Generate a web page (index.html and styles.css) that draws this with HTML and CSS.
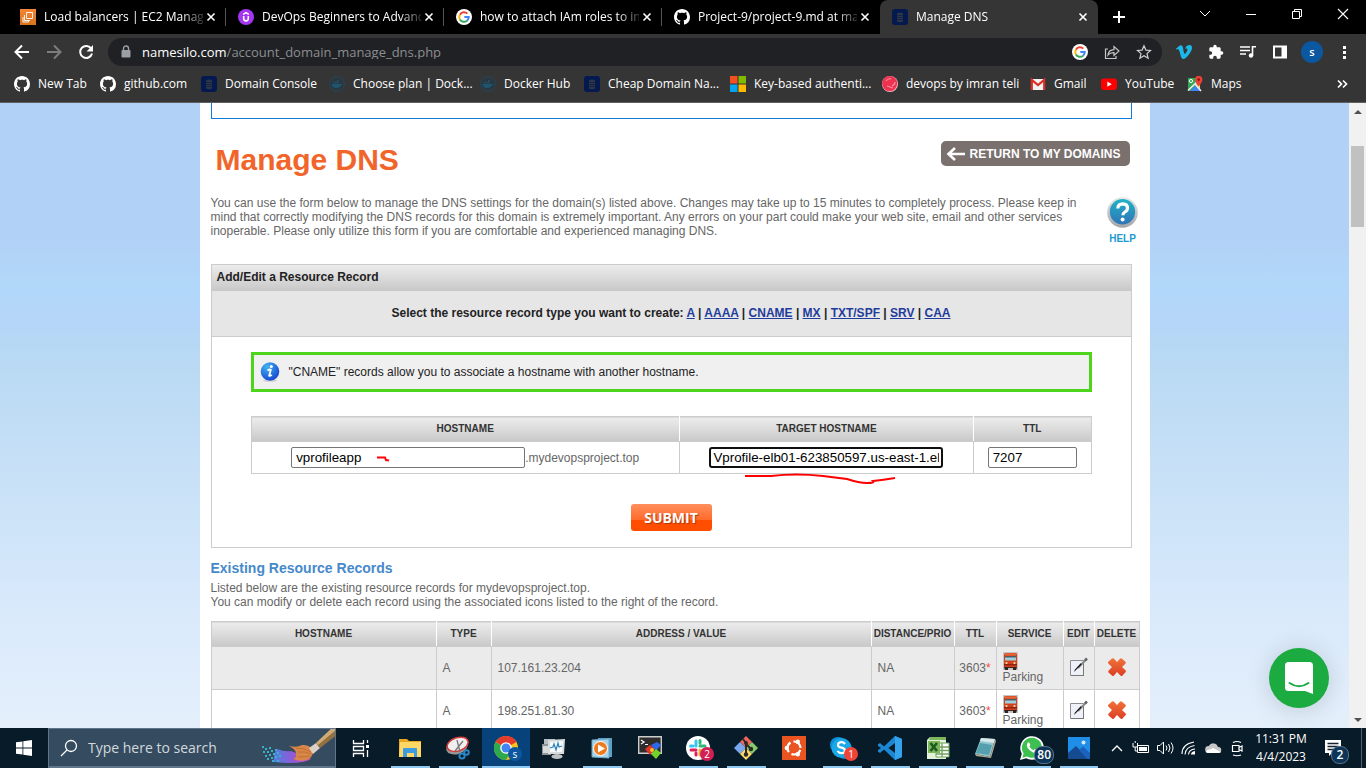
FILE: index.html
```html
<!DOCTYPE html>
<html lang="en">
<head>
<meta charset="utf-8">
<title>Manage DNS</title>
<link rel="stylesheet" href="styles.css">
</head>
<body>
<svg class="defs" aria-hidden="true">
  <defs>
    <linearGradient id="g-orange" x1="0" y1="0" x2="0" y2="1"><stop offset="0" stop-color="#f58536"/><stop offset="1" stop-color="#d9711b"/></linearGradient>
    <linearGradient id="g-help" x1="0" y1="0" x2="0" y2="1"><stop offset="0" stop-color="#22b3c6"/><stop offset="1" stop-color="#2f74b8"/></linearGradient>
    <linearGradient id="g-ring" x1="0" y1="0" x2="0" y2="1"><stop offset="0" stop-color="#e8e8e8"/><stop offset="1" stop-color="#a5a5a8"/></linearGradient>
    <radialGradient id="g-info" cx=".35" cy=".25" r=".9"><stop offset="0" stop-color="#3fb4f4"/><stop offset="1" stop-color="#1236c9"/></radialGradient>
    <linearGradient id="g-x" x1="0" y1="0" x2="0" y2="1"><stop offset="0" stop-color="#f0733a"/><stop offset="1" stop-color="#db3f24"/></linearGradient>
    <linearGradient id="g-brush" x1="0" y1="0" x2="1" y2="0"><stop offset="0" stop-color="#4f7fe0"/><stop offset=".5" stop-color="#8f5bd6"/><stop offset="1" stop-color="#d24fc4"/></linearGradient>
  </defs>
  <symbol id="i-close" viewBox="0 0 16 16"><path d="M4.500 4.500l7 7M11.500 4.500l-7 7" stroke="#fff" stroke-width="1.600" fill="none"/></symbol>
  <symbol id="i-github" viewBox="0 0 16 16"><path fill="#fff" d="M8 0C3.580 0 0 3.580 0 8c0 3.540 2.290 6.530 5.470 7.590.4.070.550-.170.550-.380 0-.190-.010-.820-.010-1.490-2.010.370-2.530-.490-2.690-.940-.090-.230-.480-.940-.820-1.130-.280-.150-.680-.520-.010-.530.630-.010 1.080.580 1.230.820.720 1.210 1.870.870 2.330.660.070-.520.280-.870.510-1.070-1.780-.2-3.640-.890-3.640-3.950 0-.870.310-1.590.820-2.150-.080-.2-.360-1.020.080-2.120 0 0 .670-.210 2.200.820.640-.180 1.320-.270 2-.270s1.360.090 2 .270c1.530-1.040 2.200-.820 2.200-.820.440 1.100.160 1.920.080 2.120.510.560.820 1.270.820 2.150 0 3.070-1.870 3.750-3.650 3.950.290.250.540.730.540 1.480 0 1.070-.010 1.930-.010 2.200 0 .210.150.460.550.380A8.010 8.010 0 0 0 16 8c0-4.420-3.580-8-8-8z"/></symbol>
  <symbol id="i-silo" viewBox="0 0 16 16"><rect width="16" height="16" rx="3" fill="#04194f"/><path d="M5 4.500q3-2 6 0v8q-3 1.500-6 0z" fill="#2e3646"/><path d="M5 6.500h6M5 8.500h6M5 10.500h6" stroke="#0b1c49" stroke-width=".7"/></symbol>
  <symbol id="i-docker" viewBox="0 0 16 16"><circle cx="8" cy="8" r="7.400" fill="#2c363d" stroke="#24475c"/><path d="M2.500 8h9q1.500 0 2-1 .3 1.500-1.300 1.800Q11 12 7 12q-4 0-4.500-4z" fill="#1e5573"/><path d="M4 5.800h1.500v1.500H4zM6 5.800h1.500v1.500H6zM8 5.800h1.500v1.500H8zM8 4h1.500v1.400H8z" fill="#1e5573"/></symbol>
  <symbol id="i-google" viewBox="0 0 16 16"><circle cx="8" cy="8" r="8" fill="#fff"/><path d="M11.360 4.640A4.750 4.750 0 0 0 3.880 5.630" stroke="#ea4335" stroke-width="2" fill="none"/><path d="M3.880 5.630a4.750 4.750 0 0 0 0 4.750" stroke="#fbbc05" stroke-width="2" fill="none"/><path d="M3.880 10.380a4.750 4.750 0 0 0 7.180 1.260" stroke="#34a853" stroke-width="2" fill="none"/><path d="M11.060 11.640A4.750 4.750 0 0 0 12.750 8H8.300" stroke="#4285f4" stroke-width="2" fill="none"/></symbol>
  <symbol id="i-bus" viewBox="0 0 15 18"><rect width="15" height="18" fill="#c9c4c4"/><path d="M1 2.500Q1 1 3 1h9q2 0 2 1.500V15H1z" fill="#d1401f"/><path d="M2 1.500h11v2H2z" fill="#e8683c"/><path d="M2 4h11v4.500H2z" fill="#9fd0dc"/><path d="M2 4h11v1.500H2z" fill="#4d5d66"/><path d="M1 12h13v1.500H1z" fill="#8e2312"/><circle cx="3.500" cy="11" r="1.100" fill="#ffe2a0"/><circle cx="11.500" cy="11" r="1.100" fill="#ffe2a0"/><path d="M1 15h4v3H2zM10 15h4l-1 3h-3z" fill="#2b2525"/><path d="M5 15h5v1H5z" fill="#4b1e15"/></symbol>
  <symbol id="i-edit" viewBox="0 0 20 20"><path d="M1.500 3.500h13v15h-13z" fill="#eef1f8" stroke="#8a8d94"/><path d="M2 18.500h13M14.500 4v15" stroke="#777" fill="none"/><path d="M17.500 2L9 11" stroke="#8a8a8a" stroke-width="2"/><path d="M12.500 7.500L5 15l1-2.500 6-6.500z" fill="#111"/><path d="M18 1.500l-2 2" stroke="#666" stroke-width="2.500"/></symbol>
  <symbol id="i-delete" viewBox="0 0 20 20"><path d="M5 1.500q1-.8 2 .3l3 3.200 3-3.200q1-1 2 0l3.500 3q.8 1-.2 2L15 10l3.500 3.200q1 1 0 2L15.500 18.500q-1 1-2 0L10 15l-3 3.500q-1 1-2 0l-3.500-3q-.8-1 .2-2L5 10 1.500 6.800q-1-1-.2-2z" fill="url(#g-x)"/></symbol>
</svg>

<header class="browser">
  <nav class="tabstrip" aria-label="Tabs">
    <div class="tab"><svg class="icon16" viewBox="0 0 16 16"><path fill="url(#g-orange)" d="M0 0h16v16H0z"/><path d="M6.500 3.500h6v6h-6zM4.500 6v5.500H10M3 8v5h5.500v-2" fill="none" stroke="#fff" stroke-width=".9"/></svg><span class="tab-title">Load balancers | EC2 Manage</span><button class="tab-close" aria-label="Close tab"><svg><use href="#i-close"/></svg></button></div>
    <div class="tab"><svg class="icon16" viewBox="0 0 16 16"><circle cx="8" cy="8" r="8" fill="#a435f0"/><path d="M5.200 5.400L8 3.600l2.800 1.800M5.700 7v2.600q0 2.300 2.300 2.300t2.300-2.300V7" fill="none" stroke="#fff" stroke-width="1.600"/></svg><span class="tab-title">DevOps Beginners to Advanc</span><button class="tab-close" aria-label="Close tab"><svg><use href="#i-close"/></svg></button></div>
    <div class="tab"><svg class="icon16"><use href="#i-google"/></svg><span class="tab-title">how to attach IAm roles to in</span><button class="tab-close" aria-label="Close tab"><svg><use href="#i-close"/></svg></button></div>
    <div class="tab tab-last"><svg class="icon16"><use href="#i-github"/></svg><span class="tab-title">Project-9/project-9.md at ma</span><button class="tab-close" aria-label="Close tab"><svg><use href="#i-close"/></svg></button></div>
    <div class="tab tab-active"><svg class="icon16"><use href="#i-silo"/></svg><span class="tab-title">Manage DNS</span><button class="tab-close" aria-label="Close tab"><svg><use href="#i-close"/></svg></button></div>
    <button class="new-tab" aria-label="New tab"><svg viewBox="0 0 16 16"><path d="M8 2v12M2 8h12" stroke="#fff" stroke-width="2"/></svg></button>
    <div class="window-controls">
      <button aria-label="Search tabs"><svg viewBox="0 0 16 16"><path d="M3 5l5 5 5-5" fill="none" stroke="#fff"/></svg></button>
      <button aria-label="Minimize"><svg viewBox="0 0 16 16"><path d="M3 8.500h10" stroke="#fff"/></svg></button>
      <button aria-label="Restore"><svg viewBox="0 0 16 16"><path d="M3.500 5.500h7v7h-7zM5.500 5.500v-2h7v7h-2" fill="none" stroke="#fff"/></svg></button>
      <button aria-label="Close"><svg viewBox="0 0 16 16"><path d="M3 3l10 10M13 3L3 13" stroke="#fff" stroke-width="1.100"/></svg></button>
    </div>
  </nav>

  <div class="toolbar">
    <button aria-label="Back"><svg viewBox="0 0 16 16"><path d="M15 8H2M8 1.500L1.500 8 8 14.500" fill="none" stroke="#fff" stroke-width="2"/></svg></button>
    <button aria-label="Forward"><svg viewBox="0 0 16 16"><path d="M1 8h13M8 1.500L14.500 8 8 14.500" fill="none" stroke="#7d7d7d" stroke-width="2"/></svg></button>
    <button aria-label="Reload"><svg viewBox="0 0 16 16"><path d="M13.300 4.800A6 6 0 1 0 14 9.500" fill="none" stroke="#fff" stroke-width="2"/><path d="M15 1v6.500H8.500z" fill="#fff"/></svg></button>
    <div class="address">
      <svg class="lock" viewBox="0 0 10 14"><rect x="0.500" y="5" width="9" height="7.500" rx="1" fill="#9aa0a6"/><path d="M2.500 5V3.500a2.500 2.500 0 0 1 5 0V5" fill="none" stroke="#9aa0a6" stroke-width="1.400"/></svg>
      <label class="host" for="url">namesilo.com</label>
      <input id="url" class="url" type="text" value="/account_domain_manage_dns.php">
      <button aria-label="Google"><svg><use href="#i-google"/></svg></button>
      <button aria-label="Share"><svg viewBox="0 0 16 16"><path d="M4 5H1.500v9.500H12V12" fill="none" stroke="#c7c7c7" stroke-width="1.200"/><path d="M4 11q.5-5 6-5.300V2.500L15 7l-5 4.500V8.600Q6 8.500 4 11z" fill="none" stroke="#c7c7c7" stroke-width="1.200"/></svg></button>
      <button aria-label="Bookmark"><svg viewBox="0 0 16 16"><path d="M8 1.800l1.900 4.300 4.600.4-3.500 3.100 1.100 4.600L8 11.700l-4.100 2.500L5 9.600 1.500 6.500l4.600-.4z" fill="none" stroke="#d0d0d0" stroke-width="1.200"/></svg></button>
    </div>
    <button aria-label="Vimeo"><svg viewBox="0 0 24 24"><path fill="#1ab7ea" d="M23.977 6.416c-.105 2.338-1.739 5.543-4.894 9.609-3.268 4.247-6.026 6.370-8.290 6.370-1.409 0-2.578-1.294-3.553-3.881L5.322 11.400C4.603 8.816 3.834 7.522 3.010 7.522c-.179 0-.806.378-1.881 1.132L0 7.197a315.065 315.065 0 0 0 3.501-3.128C5.080 2.701 6.266 1.984 7.055 1.910c1.867-.180 3.016 1.100 3.447 3.838.465 2.953.789 4.789.971 5.507.539 2.450 1.131 3.674 1.776 3.674.502 0 1.256-.796 2.265-2.385 1.004-1.589 1.540-2.797 1.612-3.628.144-1.371-.395-2.061-1.614-2.061-.574 0-1.167.121-1.777.391 1.186-3.868 3.434-5.757 6.762-5.637 2.473.060 3.628 1.664 3.493 4.797z"/></svg></button>
    <button aria-label="Extensions"><svg viewBox="0 0 24 24"><path fill="#fff" d="M20.500 11H19V7c0-1.100-.9-2-2-2h-4V3.500a2.500 2.500 0 0 0-5 0V5H4c-1.100 0-1.990.9-1.990 2v3.800H3.500c1.490 0 2.700 1.210 2.700 2.700s-1.210 2.700-2.700 2.700H2V20c0 1.100.9 2 2 2h3.800v-1.500c0-1.490 1.210-2.700 2.700-2.700s2.700 1.210 2.700 2.700V22H17c1.100 0 2-.9 2-2v-4h1.500a2.500 2.500 0 0 0 0-5z"/></svg></button>
    <button aria-label="Media"><svg viewBox="0 0 16 16"><path d="M0 3h10M0 6.500h10M0 10h6" stroke="#fff" stroke-width="1.600"/><path d="M12.500 11.500V2.800H16" fill="none" stroke="#fff" stroke-width="1.600"/><circle cx="11" cy="11.500" r="2.200" fill="#fff"/></svg></button>
    <button aria-label="Side panel"><svg viewBox="0 0 16 16"><path d="M2 2.500h12v11H2z" fill="none" stroke="#fff" stroke-width="2"/><path d="M9.500 2.500H14v11H9.500z" fill="#fff"/></svg></button>
    <button aria-label="Profile"><span class="avatar">s</span></button>
    <button aria-label="Menu"><svg viewBox="0 0 16 16"><path d="M7 2h3v3H7zM7 7h3v3H7zM7 12h3v3H7z" fill="#fff"/></svg></button>
  </div>

  <nav class="bookmarks" aria-label="Bookmarks">
    <a href="#"><svg><use href="#i-github"/></svg>New Tab</a>
    <a href="#"><svg><use href="#i-github"/></svg>github.com</a>
    <a href="#"><svg><use href="#i-silo"/></svg>Domain Console</a>
    <a href="#"><svg><use href="#i-docker"/></svg>Choose plan | Dock...</a>
    <a href="#"><svg><use href="#i-docker"/></svg>Docker Hub</a>
    <a href="#"><svg><use href="#i-silo"/></svg>Cheap Domain Na...</a>
    <a href="#"><svg viewBox="0 0 16 16"><path fill="#f25022" d="M0 0h7.500v7.500H0z"/><path fill="#7fba00" d="M8.500 0H16v7.500H8.500z"/><path fill="#00a4ef" d="M0 8.500h7.500V16H0z"/><path fill="#ffb900" d="M8.500 8.500H16V16H8.500z"/></svg>Key-based authenti...</a>
    <a href="#"><svg viewBox="0 0 16 16"><circle cx="8" cy="8" r="8" fill="#f9b6bf"/><circle cx="7.700" cy="7.600" r="7.500" fill="#ee3350"/><path d="M4 5q2-3 5-2M10 10q3-1 3-4M5 10l6 2" stroke="#ff8fa0" stroke-width="1.200" fill="none"/></svg>devops by imran teli</a>
    <a href="#"><svg viewBox="0 0 16 16"><path fill="#f2f2f2" d="M1 3h14v11H1z"/><path d="M1.800 14V3.800L8 9l6.200-5.200V14" fill="none" stroke="#d93025" stroke-width="2.200"/></svg>Gmail</a>
    <a href="#"><svg viewBox="0 0 16 16"><rect y="2.500" width="16" height="11.500" rx="3" fill="#f00"/><path d="M6.300 5.500v5.300l4.500-2.600z" fill="#fff"/></svg>YouTube</a>
    <a href="#"><svg viewBox="0 0 16 16"><path fill="#34a853" d="M1 2h12v13H1z"/><path fill="#4285f4" d="M3 15l6-6 5 6z"/><path fill="#f3d25b" d="M9 8l4 5V5z"/><path d="M1 14.500L12 4M8.500 8.500L14 15" stroke="#eee" stroke-width="1.600"/><circle cx="4" cy="5" r="1.600" fill="none" stroke="#fff"/><path d="M8 3.500a3.700 3.700 0 0 1 7.400 0q0 2.500-3.700 7Q8 6 8 3.500z" fill="#ea4335"/><circle cx="11.700" cy="3.600" r="1.300" fill="#811"/></svg>Maps</a>
    <button class="more" aria-label="More bookmarks"><svg viewBox="0 0 16 16"><path d="M3 4.500L6.500 8 3 11.500M8 4.500L11.500 8 8 11.500" fill="none" stroke="#fff" stroke-width="1.700"/></svg></button>
  </nav>
</header>

<div class="viewport">
  <main class="canvas">
    <div class="page">
      <div class="domain-box"></div>
      <div class="title-row">
        <h1>Manage DNS</h1>
        <a class="return" href="#"><svg viewBox="0 0 20 14"><path d="M19 7H3M9 1L2.500 7 9 13" fill="none" stroke="#fff" stroke-width="2.600"/></svg>RETURN TO MY DOMAINS</a>
      </div>
      <div class="intro">
        <p>You can use the form below to manage the DNS settings for the domain(s) listed above. Changes may take up to 15 minutes to completely process. Please keep in mind that correctly modifying the DNS records for this domain is extremely important. Any errors on your part could make your web site, email and other services inoperable. Please only utilize this form if you are comfortable and experienced managing DNS.</p>
        <a class="help" href="#"><svg viewBox="0 0 31 31"><circle cx="15.500" cy="15.500" r="15.300" fill="url(#g-ring)"/><circle cx="15.500" cy="14.800" r="12.700" fill="url(#g-help)"/><path d="M10.800 11.500q.2-4.700 5-4.700 4.700.2 4.700 4.200 0 2.400-2.600 4-2 1.200-2 3.200" fill="none" stroke="#fff" stroke-width="3.200"/><circle cx="15.600" cy="22.500" r="2" fill="#fff"/></svg>HELP</a>
      </div>

      <form class="panel">
        <h2 class="panel-head">Add/Edit a Resource Record</h2>
        <p class="types">Select the resource record type you want to create: <a href="#">A</a> | <a href="#">AAAA</a> | <a href="#">CNAME</a> | <a href="#">MX</a> | <a href="#">TXT/SPF</a> | <a href="#">SRV</a> | <a href="#">CAA</a></p>
        <div class="panel-body">
          <p class="notice"><svg viewBox="0 0 20 20"><ellipse cx="10" cy="18.500" rx="7" ry="1.300" fill="#cfcfd6"/><circle cx="10" cy="9.500" r="9.300" fill="url(#g-info)"/><circle cx="11.300" cy="4.600" r="1.500" fill="#fff"/><path d="M7.500 8.500q2-1.500 3.300-.8l-1.600 6q.8.700 2.500-.8" fill="none" stroke="#fff" stroke-width="1.800"/></svg>"CNAME" records allow you to associate a hostname with another hostname.</p>
          <table class="grid entry">
            <colgroup><col class="c-host"><col class="c-target"><col class="c-ttl"></colgroup>
            <thead><tr><th id="l-host">HOSTNAME</th><th id="l-target">TARGET HOSTNAME</th><th id="l-ttl">TTL</th></tr></thead>
            <tbody><tr>
              <td><div class="field"><input type="text" aria-labelledby="l-host" value="vprofileapp">.mydevopsproject.top<svg class="mark mark-host" viewBox="0 0 14 6"><path d="M1 1.500h8l1 2.500 3 .5" fill="none" stroke="#f00" stroke-width="2"/></svg></div></td>
              <td><div class="field"><input class="focused" type="text" aria-labelledby="l-target" value="Vprofile-elb01-623850597.us-east-1.elb.amazonaws.com"><svg class="mark mark-target" viewBox="0 0 152 12"><path d="M1 3h26q25-3 52 0l24 3q12 4 20 4t6-2q10-1 22-3" fill="none" stroke="#f00" stroke-width="2"/></svg></div></td>
              <td><div class="field"><input class="short" type="text" aria-labelledby="l-ttl" value="7207"></div></td>
            </tr></tbody>
          </table>
          <button class="submit" type="button">SUBMIT</button>
        </div>
      </form>

      <h2 class="records-title">Existing Resource Records</h2>
      <p class="records-text">Listed below are the existing resource records for mydevopsproject.top.<br>You can modify or delete each record using the associated icons listed to the right of the record.</p>
      <table class="grid records">
        <colgroup><col class="r-host"><col class="r-type"><col><col class="r-dist"><col class="r-ttl"><col class="r-service"><col class="r-edit"><col class="r-delete"></colgroup>
        <thead><tr><th>HOSTNAME</th><th>TYPE</th><th>ADDRESS / VALUE</th><th>DISTANCE/PRIO</th><th>TTL</th><th>SERVICE</th><th>EDIT</th><th>DELETE</th></tr></thead>
        <tbody>
          <tr><td></td><td>A</td><td>107.161.23.204</td><td>NA</td><td class="ttl">3603<span class="star">*</span></td><td class="service"><svg><use href="#i-bus"/></svg>Parking</td><td class="action"><button aria-label="Edit"><svg><use href="#i-edit"/></svg></button></td><td class="action"><button aria-label="Delete"><svg><use href="#i-delete"/></svg></button></td></tr>
          <tr><td></td><td>A</td><td>198.251.81.30</td><td>NA</td><td class="ttl">3603<span class="star">*</span></td><td class="service"><svg><use href="#i-bus"/></svg>Parking</td><td class="action"><button aria-label="Edit"><svg><use href="#i-edit"/></svg></button></td><td class="action"><button aria-label="Delete"><svg><use href="#i-delete"/></svg></button></td></tr>
        </tbody>
      </table>
    </div>
  </main>
  <div class="scrollbar"><span class="arrow up"></span><span class="thumb"></span><span class="arrow down"></span></div>
  <button class="chat" aria-label="Open chat"><svg viewBox="0 0 28 32"><path d="M3.500 0h21Q28 0 28 3.500V32l-8-3H3.500Q0 29 0 25.500v-22Q0 0 3.500 0z" fill="#fff"/><path d="M4.500 21q9.500 6.500 19 0" fill="none" stroke="#1bab40" stroke-width="2" stroke-linecap="round"/></svg></button>
</div>

<footer class="taskbar">
  <button class="start" aria-label="Start"><svg viewBox="0 0 16 16"><path d="M0 2.300l6.500-.9v6.200H0zM7.300 1.300L16 0v7.600H7.300zM0 8.400h6.500v6.200L0 13.700zM7.300 8.400H16V16l-8.700-1.300z" fill="#fff"/></svg></button>
  <div class="search">
    <svg class="magnifier" viewBox="0 0 18 18"><circle cx="11" cy="7" r="5.500" fill="none" stroke="#fff" stroke-width="1.300"/><path d="M7 11L1 17" stroke="#fff" stroke-width="1.300"/></svg>
    <input type="text" aria-label="Search" placeholder="Type here to search">
    <svg class="brush" viewBox="0 0 76 38"><path d="M15 33q-1-8 3-13 8 3 14 2l20 8q-10 6-37 3z" fill="url(#g-brush)"/><g fill="#35b4c9"><path d="M3 17h2v2H3zM6 19h2v2H6zM10 18h2v2h-2zM4 22h2v2H4zM8 22h2v2H8zM12 21h2v2h-2zM16 20h2v2h-2zM6 26h2v2H6zM10 25h2v2h-2zM14 24h2v2h-2zM18 23h2v2h-2zM8 29h2v2H8zM12 28h2v2h-2zM16 27h2v2h-2zM20 26h2v2h-2zM13 31h2v2h-2zM18 31h2v2h-2z"/></g><path d="M30 17q8 2 13-1 8-1 11 6 0 7-7 9-6 2-13-1 4-1 3-5 0-5-7-8z" fill="#d98748"/><path d="M37 19q9 0 15 4M39 23q7-1 13 2M39 28q6 0 12-1" stroke="#b96a30" stroke-width=".8" fill="none"/><path d="M50 19l7-5 4 5-7 6z" fill="#dccfc6"/><path d="M57 14L74-2h4v8L61 19z" fill="#92703f"/><path d="M57 14L74-2h3v3L59 16z" fill="#cfac76"/></svg>
  </div>
  <button class="app" aria-label="Task view"><svg viewBox="0 0 24 24"><path d="M5.500 4v3.500h10V4M5.500 21v-3.500h10V21M5.500 10.500h10v4h-10zM19.500 4v3M19.500 14v7" fill="none" stroke="#fff" stroke-width="1.300"/><path d="M18 9h3v3h-3z" fill="#fff"/></svg></button>
  <div class="apps">
    <button class="app open" aria-label="File Explorer"><svg viewBox="0 0 24 24"><path d="M1 3h8l2 2h12v16H1z" fill="#e9a51e"/><path d="M2 6h21v15H1z" fill="#ffd766"/><path d="M5 21v-8q0-1 1-1h12q1 0 1 1v8h-3v-4H9v4z" fill="#3d9be0"/></svg></button>
    <button class="app open" aria-label="Snipping Tool"><svg viewBox="0 0 24 24"><ellipse cx="11" cy="11" rx="11" ry="7" transform="rotate(-18 11 11)" fill="#999"/><ellipse cx="11.500" cy="8.500" rx="10.800" ry="6.600" transform="rotate(-18 11 8)" fill="#f0eeee" stroke="#d53d3d" stroke-width="1.500"/><path d="M11 4l3 12M17 5L9 15" stroke="#777" stroke-width="1.300"/><circle cx="16" cy="20" r="2.600" fill="none" stroke="#2b86c5" stroke-width="2"/><circle cx="20.500" cy="16.500" r="2.300" fill="none" stroke="#2b86c5" stroke-width="2"/></svg></button>
    <button class="app current" aria-label="Chrome"><svg viewBox="0 0 24 24"><circle cx="12" cy="12" r="12" fill="#fbc117"/><path d="M12 12L1.600 6A12 12 0 0 1 22.400 6z" fill="#e33b2e"/><path d="M12 12L1.600 6A12 12 0 0 0 12 24l5-9z" fill="#2da94f"/><circle cx="12" cy="12" r="5.800" fill="#fff"/><circle cx="12" cy="12" r="4.500" fill="#4285f4"/></svg><span class="badge blue">s</span></button>
    <button class="app" aria-label="System monitor"><svg viewBox="0 0 24 24"><path d="M2 3h11v14H2z" fill="#b7bcc0"/><path d="M0 8h9v11H0z" fill="#8d9498"/><path d="M1 10h8v7H1z" fill="#d7dadb"/><path d="M6 4l17-1-1 15H6z" fill="#d9dcdd"/><path d="M8 6l13-1-1 11H8z" fill="#f6fafc"/><path d="M8 12l3-1 1-3 2 6 2-7 1 4 3-1" fill="none" stroke="#2b7fb5" stroke-width="1.200"/><ellipse cx="15" cy="20.500" rx="5.500" ry="2.500" fill="#bfc3c5"/></svg></button>
    <button class="app open" aria-label="Media player"><svg viewBox="0 0 24 24"><path d="M8 2h14v19H8z" fill="#5ba0c8"/><path d="M2 4l17-1v19L2 21z" fill="#a8d3e8" stroke="#6fa9ca"/><circle cx="10.500" cy="12.500" r="7" fill="#f07a1b" stroke="#fff"/><path d="M8 8.500v8l7-4z" fill="#fff"/></svg></button>
    <button class="app" aria-label="MobaXterm"><svg viewBox="0 0 24 24"><path d="M.7.700h22.600v16.600H.700z" fill="#2f2c2c" stroke="#ccc" stroke-width="1.400"/><path d="M3 4l3 2-3 2M7 8.500h3" fill="none" stroke="#fff" stroke-width="1.200"/><path d="M7 13l5-4 5 4-5 6z" fill="#e3322b"/><path d="M13 9l6-3 4 3-5 6z" fill="#2d68e8"/><path d="M13 18l5-5 5 4-5 6z" fill="#72d32b"/><circle cx="14" cy="14" r="2" fill="#f9c62b"/></svg></button>
    <button class="app open" aria-label="Slack"><svg viewBox="0 0 24 24"><circle cx="12" cy="12" r="12" fill="#fff"/><g stroke-width="3" stroke-linecap="round" fill="none"><path d="M10 5v5M4.500 10H7" stroke="#36c5f0"/><path d="M14 10h5M14 4.500V7" stroke="#2eb67d"/><path d="M14 14v5M17 14h2" stroke="#ecb22e"/><path d="M5 14h5M10 17v2" stroke="#e01e5a"/></g></svg><span class="badge pink">2</span></button>
    <button class="app open" aria-label="Git"><svg viewBox="0 0 24 24"><path d="M12 0l6 6-6 6-6-6z" fill="#f0665f"/><path d="M6 6l6 6-6 6-6-6z" fill="#7ba7ef"/><path d="M18 6l6 6-6 6-6-6z" fill="#84cb69"/><path d="M12 12l6 6-6 6-6-6z" fill="#fbd96a"/><path d="M9 3l3 4v12M12 8l5 5" fill="none" stroke="#2e2826" stroke-width="2"/><circle cx="12" cy="7" r="2" fill="#2e2826"/><circle cx="17" cy="13" r="2.200" fill="#2e2826"/><circle cx="12" cy="18.500" r="2.200" fill="#2e2826"/></svg></button>
    <button class="app" aria-label="Ubuntu"><svg viewBox="0 0 24 24"><path d="M0 0h24v24H0z" fill="#e95420"/><circle cx="12" cy="12" r="6.500" fill="none" stroke="#fff" stroke-width="2.200" stroke-dasharray="10.600 3" stroke-dashoffset="-2"/><circle cx="4.800" cy="12" r="2.200" fill="#fff"/><circle cx="15.800" cy="5.800" r="2.200" fill="#fff"/><circle cx="15.800" cy="18.200" r="2.200" fill="#fff"/></svg></button>
    <button class="app open" aria-label="Skype"><svg viewBox="0 0 24 24"><circle cx="8" cy="9" r="8" fill="#0a8fd8"/><circle cx="15" cy="15" r="8" fill="#0a8fd8"/><circle cx="11.500" cy="12" r="10" fill="#1aa8e8"/><path d="M15 8q-1.500-2-4-1.800-3 .3-3 2.800 0 2 3.500 2.700T15 14.500q0 2.500-3.500 2.700Q9 17.200 7.500 15" fill="none" stroke="#fff" stroke-width="2.200"/></svg><span class="badge red">1</span></button>
    <button class="app open" aria-label="Visual Studio Code"><svg viewBox="0 0 24 24"><path d="M17 0l7 3v18l-7 3L6 13.500 2 17l-2-1.200V14l3-2-3-2V8.200L2 7l4 3.500z" fill="#1b86d2"/><path d="M17 0l7 3v18l-7 3z" fill="#33a3ec"/><path d="M17 7v10l-6.500-5z" fill="#081b29"/></svg></button>
  </div>
  <div class="apps apps-narrow">
    <button class="app open" aria-label="Excel"><svg viewBox="0 0 24 24"><path d="M4 1h16v22H1V4z" fill="#e3f1d8"/><path d="M4 1h16v3H3z" fill="#7db65b"/><path d="M10 7h13v14H10z" fill="#fff" stroke="#6da35c"/><path d="M10 11h13M10 14.500h13M10 18h13M16 7v14" stroke="#6da35c" stroke-width="1.300"/><path d="M2 5h12v12H2z" fill="#7db65b"/><path d="M4.500 7l6.500 8M11 7l-6.500 8" stroke="#1d5a20" stroke-width="2.600"/></svg></button>
    <button class="app open" aria-label="Notepad"><svg viewBox="0 0 24 24"><path d="M8 2l14 1-5 18-15-3z" fill="#8ec7cf"/><path d="M8 2l14 1-1 4-14-2z" fill="#d8e8ea"/><path d="M22 3l1 2-5 17-15-2-1-2 15 3z" fill="#b9a98e"/><path d="M7 7l12 2-3 10-13-2z" fill="#559fae"/></svg></button>
    <button class="app open" aria-label="WhatsApp"><svg viewBox="0 0 24 24"><path d="M0 24l1.800-6.200A11.800 11.800 0 1 1 6.200 22.200z" fill="#fff"/><path d="M2.300 21.700l1.300-4.300A10 10 0 1 1 7 20.500z" fill="#3dc04f"/><path d="M8 6.500q1-.5 1.500.5l.8 2q0 .6-.9 1.500 1.600 2.700 4.300 3.800l1.200-1.400 2.600 1.300q.3 2.500-2.500 2.800-2 .1-5-2.400t-3.200-5q0-2.100 1.200-3.100z" fill="#fff"/></svg><span class="badge navy">80</span></button>
    <button class="app open" aria-label="Photos"><svg viewBox="0 0 24 24"><path d="M1 1h22v22H1z" fill="#1f8ee8"/><path d="M1 17l8-7 13 13H1z" fill="#164a91"/><path d="M12 14l4-3.500 7 6.500v6h-3z" fill="#1a62bd"/><circle cx="16.500" cy="6.500" r="2" fill="#d5e9fb"/></svg></button>
  </div>
  <div class="tray">
    <button aria-label="Show hidden icons"><svg viewBox="0 0 18 18"><path d="M4 12l5-5 5 5" fill="none" stroke="#fff" stroke-width="1.300"/></svg></button>
    <button aria-label="Battery"><svg viewBox="0 0 18 18"><path d="M5.500 6.500h11v7h-11z" fill="none" stroke="#fff"/><path d="M7 8h8v4H7z" fill="#fff"/><path d="M1 4v4h4.500V4M3.200 2v2M3.200 8v4H5" fill="none" stroke="#fff"/></svg></button>
    <button aria-label="Volume"><svg viewBox="0 0 18 18"><path d="M1.500 6.500H4l3.500-3.500v12L4 11.500H1.500z" fill="none" stroke="#fff"/><path d="M10 6.500q2 2.500 0 5M12.500 5q3 4 0 8M15 3.500q4 5.500 0 11" fill="none" stroke="#fff"/></svg></button>
    <button aria-label="Network"><svg viewBox="0 0 18 18"><path d="M2 15Q2 5 14 3M5 15.500Q5.500 8 14.500 6.500M8.500 15.500q.5-5 6.500-5.500" fill="none" stroke="#fff" stroke-width="1.100"/><path d="M11 15.500q0-3 4-3.500v3.500z" fill="#fff"/></svg></button>
    <button aria-label="OneDrive"><svg viewBox="0 0 18 18"><path d="M4.500 14a3.500 3.500 0 0 1 .3-7A5 5 0 0 1 14 8a3 3 0 0 1 .5 6z" fill="#c8c8c8"/><path d="M1.800 13q1-3 4.200-2.500L9 9l8 4q-1 1-2.500 1h-10q-2 0-2.700-1z" fill="#fff"/></svg></button>
    <button aria-label="Meet Now"><svg viewBox="0 0 18 18"><path d="M4.500 6.500h6.500v6H4.500zM11 8.500l3-1.500v5l-3-1.500M5 3.500q4-2 8 0M5 16q4 1.500 8 0" fill="none" stroke="#fff" stroke-width="1.200"/></svg></button>
  </div>
  <div class="clock"><time>11:31 PM</time><time>4/4/2023</time></div>
  <button class="app action-center" aria-label="Notifications"><svg viewBox="0 0 24 24"><path d="M4 4h16v13H11l-3 3v-3H4z" fill="#fff"/><path d="M6.500 7.500h11M6.500 10.500h11M6.500 13.500h7" stroke="#14232e" stroke-width="1.300"/></svg><span class="badge navy">2</span></button>
</footer>
</body>
</html>
```
FILE: styles.css
```css
* { box-sizing: border-box; }
html, body { height: 100%; }
body {
  margin: 0;
  display: flex;
  flex-direction: column;
  overflow: hidden;
  font-family: "Liberation Sans", Arial, sans-serif;
  font-size: 12px;
  line-height: 14px;
  color: #666;
}
p, h1, h2 { margin: 0; }
button { border: 0; padding: 0; background: none; font: inherit; color: inherit; }
.defs { position: absolute; width: 0; height: 0; }

/* Browser chrome */
.browser {
  flex: none;
  background: #353535;
  border-bottom: 1px solid #606060;
  color: #fff;
  font-family: "Open Sans", "Noto Sans", sans-serif;
}
.tabstrip { display: flex; height: 34px; padding-left: 8px; background: #000; }
.tab {
  position: relative;
  flex: 0 1 218px;
  min-width: 0;
  display: flex;
  align-items: center;
  padding: 0 7px 0 12px;
}
.tab::after { content: ""; position: absolute; right: 0; top: 8px; width: 1px; height: 18px; background: #555; }
.tab-last::after, .tab-active::after { display: none; }
.tab-active { background: #353535; border-radius: 8px 8px 0 0; }
.icon16 { flex: none; width: 16px; height: 16px; }
.tab-title {
  flex: 1;
  min-width: 0;
  margin-left: 8px;
  overflow: hidden;
  white-space: nowrap;
  line-height: 18px;
  -webkit-mask-image: linear-gradient(90deg, #000 86%, rgba(0, 0, 0, .2));
  mask-image: linear-gradient(90deg, #000 86%, rgba(0, 0, 0, .2));
}
.tab-close { flex: none; width: 16px; height: 16px; }
.tab-close svg, .new-tab svg, .window-controls svg, .toolbar button svg { width: 16px; height: 16px; display: block; margin: auto; }
.new-tab { width: 42px; }
.window-controls { display: flex; margin-left: auto; height: 28px; }
.window-controls button { width: 46px; }
.toolbar { display: flex; align-items: center; height: 36px; padding: 0 6px; }
.toolbar button { flex: none; width: 32px; height: 28px; }
.address {
  flex: 1;
  display: flex;
  align-items: center;
  height: 28px;
  margin: 0 6px;
  padding: 0 2px 0 13px;
  border-radius: 14px;
  background: #202124;
  font-size: 13px;
}
.lock { width: 10px; height: 14px; margin-right: 11px; }
.url { flex: 1; min-width: 0; border: 0; padding: 0; outline: 0; background: none; color: #8b8e92; font: inherit; }
.avatar { display: block; width: 22px; margin: auto; border-radius: 50%; background: #0b57a0; line-height: 22px; font-size: 11px; font-weight: 600; }
.bookmarks {
  display: grid;
  grid-template-columns: 86px 101px 128px 151px 104px 146px 152px 148px 71px 86px 1fr auto;
  align-items: center;
  height: 32px;
  padding: 0 15px 4px 14px;
}
.bookmarks a { display: flex; align-items: center; gap: 8px; color: #fff; text-decoration: none; white-space: nowrap; }
.bookmarks svg { flex: none; width: 16px; height: 16px; display: block; }

/* Web page */
.viewport { position: relative; flex: 1; min-height: 0; display: flex; }
.canvas {
  flex: 1;
  min-width: 0;
  overflow: hidden;
  background: linear-gradient(#b1d2f6 0, #b1d2f6 22%, #b1d8fa 30%, #b5d5f9 35%, #b7d8f3 39%, #d8e9fb 80%, #e4effb 100%);
}
.page { max-width: 950px; min-height: 100%; margin: 0 auto; padding: 0 10px 0 11px; background: #fff; }
.domain-box { height: 16px; margin-right: 8px; border: solid #117bdc; border-width: 0 1px 1px; }
.title-row { display: flex; justify-content: space-between; align-items: flex-start; padding: 22px 10px 0 5px; }
h1 { font-size: 30px; line-height: 38px; color: #f1652a; }
.return {
  display: flex;
  align-items: center;
  gap: 4px;
  height: 25px;
  padding: 0 9px 0 5px;
  border-radius: 5px;
  background: #7a706e;
  color: #fff;
  font-size: 12px;
  font-weight: bold;
  text-decoration: none;
}
.return svg { width: 20px; height: 14px; }
.intro { display: flex; justify-content: space-between; align-items: flex-start; margin-top: 17px; }
.intro p { max-width: 871px; }
.help { width: 34px; display: flex; flex-direction: column; align-items: center; gap: 4px; padding-top: 1px; color: #2199d0; font-size: 10px; font-weight: bold; text-decoration: none; }
.help svg { width: 31px; height: 31px; }
.panel { margin: 18px 8px 0 0; border: 1px solid #ccc; }
.panel-head {
  padding: 0 5px;
  font-size: 12px;
  line-height: 24px;
  height: 26px;
  color: #222;
  background: linear-gradient(#ececec, #dadada 50%, #c8c8c8);
}
.types { padding: 15px 0 16px; border-bottom: 1px solid #ccc; background: #e6e6e6; color: #222; font-weight: bold; text-align: center; }
.types a { color: #1f3c9c; }
.panel-body { padding: 15px 39px 16px; }
.notice { display: flex; align-items: center; gap: 9px; height: 40px; padding: 0 6px; border: 3px solid #4cd51a; background: #f0f0f0; color: #222; }
.notice svg { width: 20px; height: 20px; }
.grid { width: 100%; border-collapse: collapse; table-layout: fixed; }
.grid th {
  height: 25px;
  padding: 0;
  border: 1px solid #ccc;
  border-right-color: #fff;
  border-left-color: #fff;
  background: linear-gradient(#ececec, #dbdbdb 50%, #c8c8c8);
  color: #333;
  font-size: 10px;
  line-height: 12px;
}
.grid th:first-child { border-left-color: #ccc; }
.grid th:last-child { border-right-color: #ccc; }
.grid td { border: 1px solid #ccc; padding: 0 5px; }
.entry { margin-top: 24px; }
.entry td { height: 32px; }
.c-host { width: 51%; }
.c-target { width: 35%; }
.field { position: relative; display: flex; align-items: center; justify-content: center; }
.field input { width: 234px; height: 21px; padding: 1px 4px; border: 1px solid #767676; border-radius: 2px; font-family: "Liberation Sans", Arial, sans-serif; color: #000; outline: 0; }
.field .focused { padding: 1px 2px; border: 2px solid #101010; border-radius: 3px; }
.field .short { width: 89px; }
.mark { position: absolute; }
.mark-host { left: 119px; top: 9px; width: 14px; height: 6px; }
.mark-target { left: 59px; top: 26px; width: 152px; height: 12px; }
.submit {
  display: block;
  width: 81px;
  height: 27px;
  margin: 30px auto 0;
  border-radius: 3px;
  background: linear-gradient(#ff8f5c, #ff6a2c 59%, #ff4e00 60%);
  color: #fff;
  font-family: "Open Sans", sans-serif;
  font-size: 14px;
  font-weight: bold;
  text-shadow: 1px 1px 1px #a33a10;
}
.records-title { margin-top: 12px; font-size: 14px; line-height: 16px; color: #4689cb; }
.records-text { margin: 5px 0 12px; }
.records { overflow: hidden; }
.records td { height: 43px; padding-left: 6px; }
.records .ttl { padding: 0; text-align: center; }
.records tbody tr:nth-child(odd) { background: #ebebeb; }
.records th { white-space: nowrap; }
.r-host { width: 225px; }
.r-type { width: 55px; }
.r-dist { width: 83px; }
.r-ttl { width: 42px; }
.r-service { width: 67px; }
.r-edit { width: 31px; }
.r-delete { width: 45px; }
.star { color: #f04a3a; }
.service svg { display: block; width: 15px; height: 18px; }
.grid .action { padding: 0; text-align: center; }
.action button { width: 20px; height: 20px; }
.action svg { display: block; width: 20px; height: 20px; }
.scrollbar { flex: none; width: 17px; display: flex; flex-direction: column; align-items: center; padding: 7px 0 6px; background: #f1f1f1; }
.arrow { border: 4px solid transparent; }
.up { border-top: 0; border-bottom-color: #505050; }
.down { margin-top: auto; border-bottom: 0; border-top-color: #505050; }
.thumb { width: 13px; height: 81px; margin-top: 32px; background: #c1c1c1; }
.chat {
  position: absolute;
  right: 37px;
  bottom: 20px;
  width: 60px;
  height: 60px;
  border-radius: 50%;
  background: #1bab40;
  box-shadow: 0 2px 24px rgba(0, 0, 0, .15);
}
.chat svg { display: block; width: 28px; height: 32px; margin: auto; }

/* Taskbar */
.taskbar { flex: none; display: flex; height: 40px; background: #081b29; color: #fff; font-family: "Open Sans", "Noto Sans", sans-serif; }
.start { width: 48px; }
.start svg { display: block; width: 16px; height: 16px; margin: auto; }
.search { position: relative; width: 288px; display: flex; align-items: center; padding-left: 11px; border: 1px solid #60758a; border-bottom-width: 2px; background: #354c60; }
.magnifier { width: 18px; height: 18px; }
.search input { width: 160px; margin-left: 10px; padding: 0; border: 0; outline: 0; background: none; color: #fff; font-family: inherit; font-size: 14px; }
.search input::placeholder { color: #d2d8dd; opacity: 1; }
.brush { width: 76px; height: 38px; margin-left: auto; }
.apps { display: flex; margin-left: 2px; }
.app { position: relative; width: 48px; height: 40px; }
.apps-narrow { margin-left: 0; }
.apps-narrow .app { width: 47px; }
.app svg { display: block; width: 24px; height: 24px; margin: auto; }
.open::after, .current::after { content: ""; position: absolute; left: 5px; right: 4px; bottom: 0; height: 2px; background: #8fc8f0; }
.current { background: #07437a; }
.current::after { left: 0; right: 0; }
.badge { position: absolute; right: 8px; bottom: 7px; min-width: 14px; height: 14px; border-radius: 8px; font-size: 10px; line-height: 14px; text-align: center; }
.blue { background: #0b57a0; }
.pink { background: #d41f55; }
.red { background: #f04438; }
.navy { right: 1px; bottom: 4px; min-width: 18px; height: 18px; padding: 0 2px; border: 1px solid #58718a; background: #0d3558; font-size: 12px; font-weight: 600; line-height: 16px; }
.tray { display: flex; margin-left: auto; }
.tray button { width: 24px; }
.tray svg { display: block; width: 18px; height: 18px; margin: auto; }
.clock { width: 64px; display: flex; flex-direction: column; justify-content: center; text-align: center; line-height: 18px; }
.action-center { width: 49px; margin-right: 4px; padding-right: 8px; border-right: 1px solid #53616b; }
.action-center .navy { right: 12px; }
```
